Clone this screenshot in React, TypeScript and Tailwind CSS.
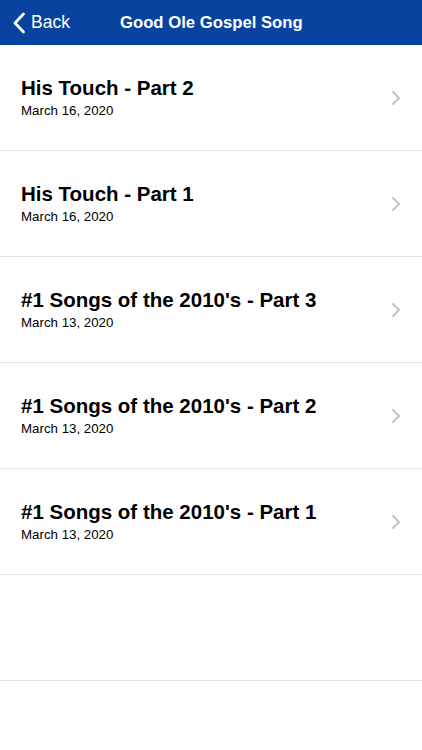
const episodes = [
  { title: 'His Touch - Part 2', date: 'March 16, 2020' },
  { title: 'His Touch - Part 1', date: 'March 16, 2020' },
  { title: "#1 Songs of the 2010's - Part 3", date: 'March 13, 2020' },
  { title: "#1 Songs of the 2010's - Part 2", date: 'March 13, 2020' },
  { title: "#1 Songs of the 2010's - Part 1", date: 'March 13, 2020' },
];

function BackChevron() {
  return (
    <svg width="14" height="22" viewBox="0 0 14 22" fill="none">
      <polyline
        points="11.5,2 3,11 11.5,20"
        stroke="currentColor"
        strokeWidth="2.8"
        strokeLinecap="round"
        strokeLinejoin="round"
      />
    </svg>
  );
}

function RowChevron() {
  return (
    <svg width="10" height="16" viewBox="0 0 10 16" fill="none">
      <polyline
        points="2,2 8,8 2,14"
        stroke="#c4c4c8"
        strokeWidth="2"
        strokeLinecap="round"
        strokeLinejoin="round"
      />
    </svg>
  );
}

export default function App() {
  return (
    <div
      className="w-[422px] h-[750px] bg-white flex flex-col overflow-hidden"
      style={{ fontFamily: '"Liberation Sans", Arial, sans-serif' }}
    >
      {/* Nav bar */}
      <header className="h-[45px] bg-[#0843a0] flex items-center text-white shrink-0">
        <div className="flex items-center pl-[12px] w-[120px]">
          <BackChevron />
          <span className="text-[17.5px] ml-[5px]">Back</span>
        </div>
        <h1 className="text-[16.7px] font-bold">Good Ole Gospel Song</h1>
      </header>

      {/* List */}
      <ul className="flex flex-col">
        {episodes.map((ep) => (
          <li
            key={ep.title}
            className="h-[106px] flex items-center border-b border-[#e4e4e6] pl-[21px] pr-[21px]"
          >
            <div className="flex-1 flex flex-col self-start pt-[31px]">
              <span className="text-[20.5px] font-bold text-black leading-[24px]">{ep.title}</span>
              <span className="text-[13.3px] text-black leading-[18px] mt-[2px]">{ep.date}</span>
            </div>
            <RowChevron />
          </li>
        ))}
        <li className="h-[106px] border-b border-[#e4e4e6]" />
      </ul>
    </div>
  );
}
